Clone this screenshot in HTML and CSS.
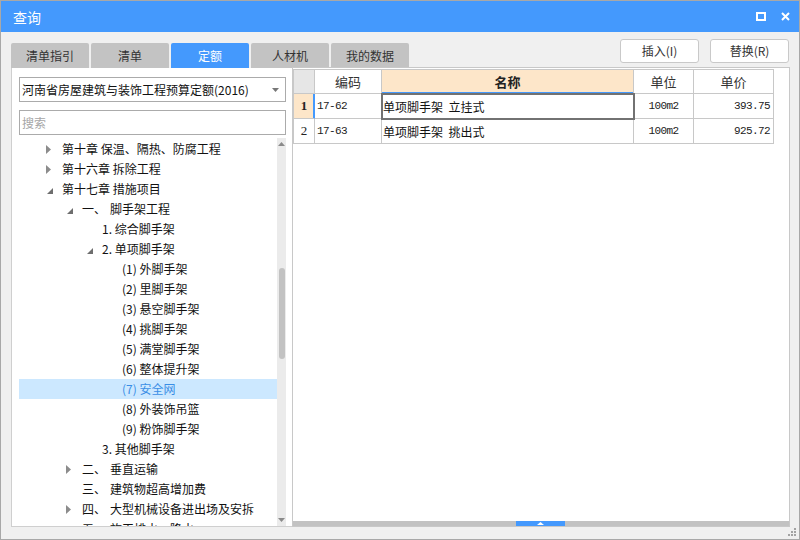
FILE: index.html
```html
<!DOCTYPE html>
<html lang="zh-CN">
<head>
<meta charset="utf-8">
<title>查询</title>
<link rel="stylesheet" href="styles.css">
</head>
<body>
<div class="window">
  <div class="titlebar">
    <span class="title">查询</span>
    <div class="winbtns">
      <svg class="wb" width="10" height="9" viewBox="0 0 10 9"><rect x="1" y="1" width="8" height="7" fill="none" stroke="#fff" stroke-width="2"/></svg>
      <svg class="wb" width="9" height="9" viewBox="0 0 9 9"><path d="M1 1 L8 8 M8 1 L1 8" stroke="#fff" stroke-width="2" fill="none"/></svg>
    </div>
  </div>
  <div class="toolbar">
    <div class="tabs">
      <div class="tab">清单指引</div>
      <div class="tab">清单</div>
      <div class="tab active">定额</div>
      <div class="tab">人材机</div>
      <div class="tab">我的数据</div>
    </div>
    <div class="actions">
      <button class="btn">插入(I)</button>
      <button class="btn">替换(R)</button>
    </div>
  </div>
  <div class="main">
    <div class="left">
      <div class="select">
        <span>河南省房屋建筑与装饰工程预算定额(2016)</span>
        <svg width="7" height="4" viewBox="0 0 7 4"><path d="M0 0 L7 0 L3.5 4Z" fill="#777"/></svg>
      </div>
      <div class="search">搜索</div>
      <div class="treewrap">
        <div class="tree">
          <div class="row l0"><span class="tg"><svg width="5" height="9" viewBox="0 0 5 9"><path d="M0 0 L5 4.5 L0 9Z" fill="#8c8c8c"/></svg></span>第十章 保温、隔热、防腐工程</div>
          <div class="row l0"><span class="tg"><svg width="5" height="9" viewBox="0 0 5 9"><path d="M0 0 L5 4.5 L0 9Z" fill="#8c8c8c"/></svg></span>第十六章 拆除工程</div>
          <div class="row l0"><span class="tg ex"><svg width="6" height="6" viewBox="0 0 6 6"><path d="M6 0 L6 6 L0 6Z" fill="#6e6e6e"/></svg></span>第十七章 措施项目</div>
          <div class="row l1"><span class="tg ex"><svg width="6" height="6" viewBox="0 0 6 6"><path d="M6 0 L6 6 L0 6Z" fill="#6e6e6e"/></svg></span><span class="num">一、</span>脚手架工程</div>
          <div class="row l2"><span class="tg"></span>1. 综合脚手架</div>
          <div class="row l2"><span class="tg ex"><svg width="6" height="6" viewBox="0 0 6 6"><path d="M6 0 L6 6 L0 6Z" fill="#6e6e6e"/></svg></span>2. 单项脚手架</div>
          <div class="row l3"><span class="tg"></span>(1) 外脚手架</div>
          <div class="row l3"><span class="tg"></span>(2) 里脚手架</div>
          <div class="row l3"><span class="tg"></span>(3) 悬空脚手架</div>
          <div class="row l3"><span class="tg"></span>(4) 挑脚手架</div>
          <div class="row l3"><span class="tg"></span>(5) 满堂脚手架</div>
          <div class="row l3"><span class="tg"></span>(6) 整体提升架</div>
          <div class="row l3 sel"><span class="tg"></span>(7) 安全网</div>
          <div class="row l3"><span class="tg"></span>(8) 外装饰吊篮</div>
          <div class="row l3"><span class="tg"></span>(9) 粉饰脚手架</div>
          <div class="row l2"><span class="tg"></span>3. 其他脚手架</div>
          <div class="row l1"><span class="tg"><svg width="5" height="9" viewBox="0 0 5 9"><path d="M0 0 L5 4.5 L0 9Z" fill="#8c8c8c"/></svg></span><span class="num">二、</span>垂直运输</div>
          <div class="row l1"><span class="tg"></span><span class="num">三、</span>建筑物超高增加费</div>
          <div class="row l1"><span class="tg"><svg width="5" height="9" viewBox="0 0 5 9"><path d="M0 0 L5 4.5 L0 9Z" fill="#8c8c8c"/></svg></span><span class="num">四、</span>大型机械设备进出场及安拆</div>
          <div class="row l1"><span class="tg"></span><span class="num">五、</span>施工排水、降水</div>
        </div>
        <div class="vscroll">
          <div class="arrow"><svg width="7" height="4" viewBox="0 0 7 4"><path d="M3.5 0 L7 4 L0 4Z" fill="#8a8a8a"/></svg></div>
          <div class="track"><div class="thumb"></div></div>
          <div class="arrow"><svg width="7" height="4" viewBox="0 0 7 4"><path d="M0 0 L7 0 L3.5 4Z" fill="#8a8a8a"/></svg></div>
        </div>
      </div>
    </div>
    <div class="right">
      <div class="grid">
        <div class="c hd corner"></div>
        <div class="c hd">编码</div>
        <div class="c hd name-hd">名称</div>
        <div class="c hd">单位</div>
        <div class="c hd">单价</div>

        <div class="c rh rh-sel">1</div>
        <div class="c mono">17-62</div>
        <div class="c txt cur">单项脚手架&nbsp; 立挂式</div>
        <div class="c mono ctr">100m2</div>
        <div class="c mono rt">393.75</div>

        <div class="c rh">2</div>
        <div class="c mono">17-63</div>
        <div class="c txt">单项脚手架&nbsp; 挑出式</div>
        <div class="c mono ctr">100m2</div>
        <div class="c mono rt">925.72</div>
      </div>
      <div class="fill"></div>
      <div class="hscroll">
        <div class="hthumb"><svg width="7" height="3" viewBox="0 0 7 3"><path d="M3.5 0 L7 3 L0 3Z" fill="#fff"/></svg></div>
      </div>
    </div>
  </div>
  <div class="statusbar">
    <svg class="grip" width="9" height="9" viewBox="0 0 9 9">
      <rect x="6" y="0" width="2" height="2" fill="#a3a3a3"/>
      <rect x="3" y="3" width="2" height="2" fill="#a3a3a3"/>
      <rect x="6" y="3" width="2" height="2" fill="#a3a3a3"/>
      <rect x="0" y="6" width="2" height="2" fill="#a3a3a3"/>
      <rect x="3" y="6" width="2" height="2" fill="#a3a3a3"/>
      <rect x="6" y="6" width="2" height="2" fill="#a3a3a3"/>
    </svg>
  </div>
</div>
</body>
</html>
```

FILE: styles.css
```css
* { box-sizing: border-box; }
html, body { margin: 0; padding: 0; }
body {
  font-family: "Noto Sans CJK SC", "Noto Sans", sans-serif;
  font-size: 12px;
  color: #222;
  background: #f0f0f0;
}
.window {
  width: 800px;
  height: 540px;
  border: 1px solid #a8a8a8;
  background: #f0f0f0;
  display: flex;
  flex-direction: column;
}
.titlebar {
  height: 31px;
  background: #4499fd;
  display: flex;
  align-items: center;
  justify-content: space-between;
  padding: 0 9px 0 12px;
  flex: none;
}
.title {
  color: #fff;
  font-size: 14px;
  line-height: 20px;
}
.winbtns {
  display: flex;
  align-items: center;
  gap: 15px;
}
.wb { display: block; }

.toolbar {
  height: 36px;
  flex: none;
  display: flex;
  justify-content: space-between;
  padding: 0 9px 0 10px;
}
.tabs {
  display: flex;
  align-items: flex-end;
  gap: 2px;
}
.tab {
  width: 78px;
  height: 25px;
  background: #c3c3c3;
  color: #333;
  border-radius: 2px 2px 0 0;
  text-align: center;
  line-height: 25px;
  font-size: 12px;
}
.tab.active {
  background: #4499fd;
  color: #fff;
}
.actions {
  display: flex;
  gap: 11px;
  padding-top: 7px;
  padding-right: 1px;
}
.btn {
  width: 79px;
  height: 24px;
  background: #fff;
  border: 1px solid #c9c9c9;
  border-radius: 3px;
  font-family: inherit;
  font-size: 12px;
  color: #333;
  padding: 0;
  line-height: 22px;
}

.main {
  height: 459px;
  flex: none;
  display: flex;
  padding: 0 9px 0 10px;
}
.left {
  width: 281px;
  height: 459px;
  background: #fff;
  border: 1px solid #cfcfcf;
  border-top: none;
  border-right: none;
  padding: 9px 6px 0 7px;
  display: flex;
  flex-direction: column;
}
.select {
  height: 25px;
  border: 1px solid #ababab;
  display: flex;
  align-items: center;
  justify-content: space-between;
  padding: 0 6px 0 2px;
  color: #111;
  line-height: 16px;
  flex: none;
}
.search {
  height: 25px;
  margin-top: 8px;
  border: 1px solid #ababab;
  color: #a6a6a6;
  padding: 0 2px;
  line-height: 23px;
  flex: none;
}
.treewrap {
  margin-top: 3px;
  flex: 1;
  display: flex;
  min-height: 0;
}
.tree {
  flex: 1;
  overflow: hidden;
  padding-top: 1px;
}
.row {
  height: 20px;
  line-height: 20px;
  display: flex;
  align-items: center;
  white-space: nowrap;
  color: #111;
}
.row.l0 { padding-left: 27px; }
.row.l1 { padding-left: 47px; }
.row.l2 { padding-left: 67px; }
.row.l3 { padding-left: 87px; }
.tg {
  width: 16px;
  height: 20px;
  flex: none;
  display: flex;
  align-items: center;
}
.tg.ex { padding-left: 1px; padding-top: 4px; }
.tg svg { display: block; }
.num { width: 28px; flex: none; }
.row.sel {
  background: #cce8ff;
  color: #3a8ee6;
}
.vscroll {
  width: 9px;
  flex: none;
  background: #ebebeb;
  display: flex;
  flex-direction: column;
}
.arrow {
  height: 12px;
  display: flex;
  align-items: center;
  justify-content: center;
  flex: none;
}
.arrow svg { display: block; }
.track {
  flex: 1;
  padding-top: 118px;
  display: flex;
  justify-content: center;
}
.thumb {
  width: 6px;
  height: 91px;
  background: #c2c2c2;
  border-radius: 3px;
}

.right {
  width: 498px;
  height: 460px;
  margin-top: -1px;
  background: #fff;
  border: 1px solid #c8c8c8;
  padding-top: 1px;
  display: flex;
  flex-direction: column;
}
.grid {
  display: grid;
  grid-template-columns: 21px 67px 252px 60px 80px;
  grid-template-rows: 24px 25px 25px;
  width: 481px;
  border-left: 1px solid #c8c8c8;
  border-top: 1px solid #c8c8c8;
  flex: none;
}
.c {
  border-right: 1px solid #c8c8c8;
  border-bottom: 1px solid #c8c8c8;
  display: flex;
  align-items: center;
  white-space: nowrap;
  color: #222;
  font-size: 12px;
}
.hd {
  justify-content: center;
  color: #333;
  font-size: 13px;
}
.corner { background: #e6e6e6; }
.name-hd {
  background: #fde6c9;
  font-weight: bold;
  color: #222;
  border-bottom-color: #4499fd;
  box-shadow: inset 0 -1px 0 #4499fd;
}
.rh {
  justify-content: center;
  font-family: "Liberation Serif", serif;
  font-size: 13px;
}
.rh-sel {
  background: #fde6c9;
  font-weight: bold;
  border-right-color: #4499fd;
  box-shadow: inset -1px 0 0 #4499fd;
}
.mono {
  font-family: "Liberation Mono", monospace;
  font-size: 11px;
  letter-spacing: -0.6px;
  padding-left: 2px;
}
.mono.ctr { justify-content: center; padding-left: 0; }
.mono.rt { justify-content: flex-end; padding-right: 3px; padding-left: 0; }
.txt {
  padding-left: 1px;
  font-size: 12px;
  color: #111;
}
.cur {
  outline: 2px solid #727272;
  outline-offset: -1px;
  position: relative;
}
.fill { flex: 1; }
.hscroll {
  height: 5px;
  flex: none;
  background: #c2c2c2;
  padding-left: 223px;
}
.hthumb {
  width: 49px;
  height: 5px;
  background: #4499fd;
  display: flex;
  align-items: center;
  justify-content: center;
}
.hthumb svg { display: block; }

.statusbar {
  flex: 1;
  display: flex;
  justify-content: flex-end;
  align-items: flex-end;
  padding: 0 2px 2px 0;
}
.grip { display: block; }
```
